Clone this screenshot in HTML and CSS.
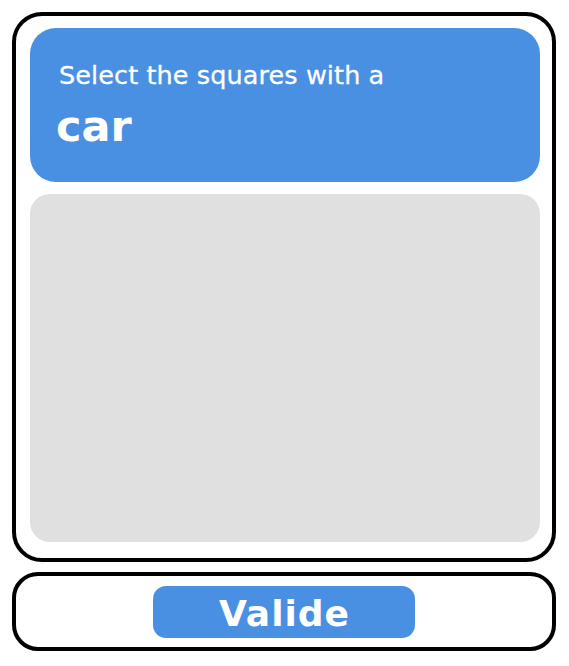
FILE: index.html
```html
<!DOCTYPE html>
<html lang="en">
<head>
<meta charset="utf-8">
<link rel="stylesheet" href="styles.css">
</head>
<body>
<div class="page">
  <section class="captcha">
    <div class="prompt">
      <div class="prompt-line">Select the squares with a</div>
      <div class="prompt-word">car</div>
    </div>
    <div class="grid-area"></div>
  </section>
  <section class="actions">
    <button class="valid-btn" type="button">Valide</button>
  </section>
</div>
</body>
</html>
```
FILE: styles.css
```css
html, body {
  margin: 0;
  padding: 0;
  background: #ffffff;
}
body {
  font-family: "DejaVu Sans", "Open Sans", sans-serif;
}
.page {
  padding: 12px 13px 0 12px;
  display: flex;
  flex-direction: column;
  gap: 10px;
}
.captcha {
  box-sizing: border-box;
  height: 550px;
  border: 4px solid #000;
  border-radius: 30px;
  padding: 12px 12px 16px 14px;
  display: flex;
  flex-direction: column;
  gap: 12px;
}
.prompt {
  box-sizing: border-box;
  height: 154px;
  background: #4a90e2;
  border-radius: 26px;
  color: #fff;
  padding: 32px 20px 0 29px;
}
.prompt-line {
  font-size: 25.5px;
  line-height: 30px;
  letter-spacing: 0.1px;
  -webkit-text-stroke: 0.3px #fff;
}
.prompt-word {
  font-size: 43px;
  line-height: 50px;
  font-weight: 700;
  margin-top: 11px;
  margin-left: -3px;
}
.grid-area {
  flex: 1;
  background: #e0e0e0;
  border-radius: 20px;
}
.actions {
  box-sizing: border-box;
  height: 79px;
  border: 4px solid #000;
  border-radius: 26px;
  display: flex;
  align-items: center;
  justify-content: center;
}
.valid-btn {
  box-sizing: border-box;
  width: 262px;
  height: 52px;
  border: none;
  border-radius: 13px;
  background: #4a90e2;
  color: #fff;
  font-family: "DejaVu Sans", "Open Sans", sans-serif;
  font-weight: 700;
  font-size: 36px;
  line-height: 49px;
  letter-spacing: 1px;
  padding: 3px 0 0 1px;
  margin-top: 1px;
}
```
